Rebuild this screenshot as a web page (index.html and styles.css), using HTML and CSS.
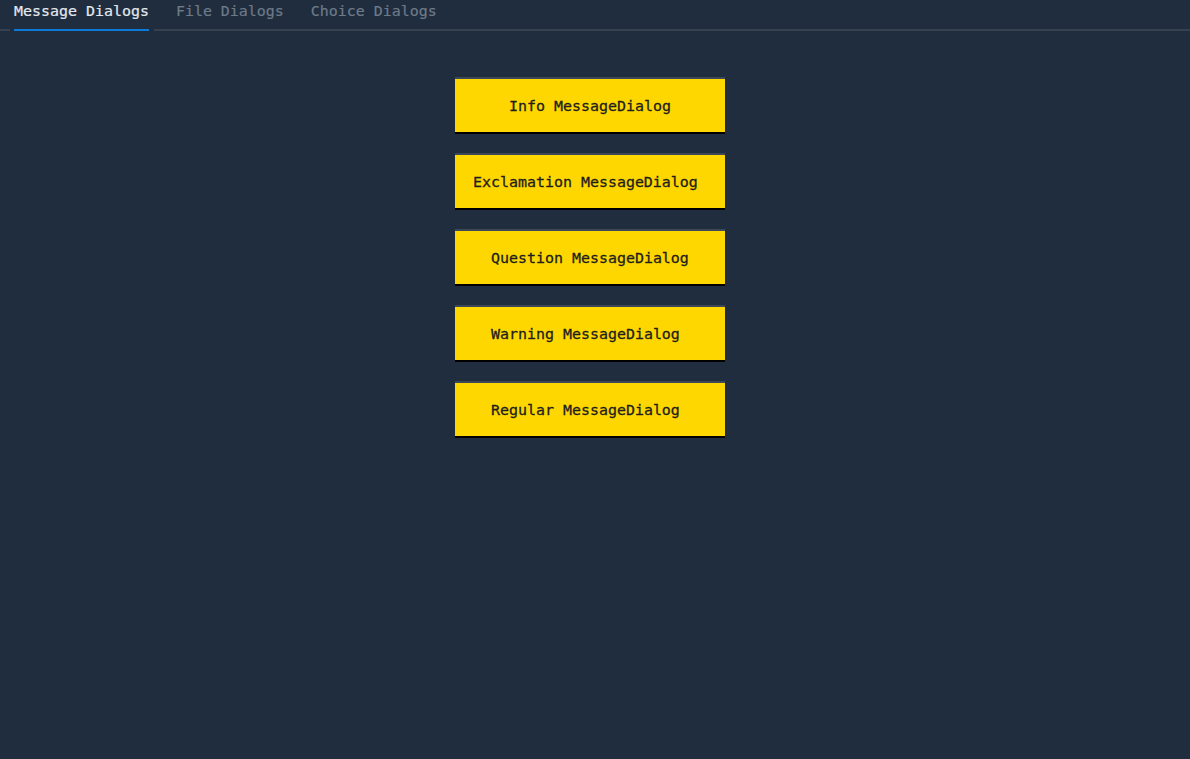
FILE: index.html
```html
<!DOCTYPE html>
<html lang="en">
<head>
<meta charset="utf-8">
<title>Message Dialogs</title>
<link rel="stylesheet" href="styles.css">
</head>
<body>
<div class="app">
  <nav class="tabs">
    <span class="tab active">Message Dialogs</span>
    <span class="tab">File Dialogs</span>
    <span class="tab">Choice Dialogs</span>
  </nav>
  <main class="panel">
    <button class="btn pad-6">Info MessageDialog</button>
    <button class="btn pad-2">Exclamation MessageDialog</button>
    <button class="btn pad-4">Question MessageDialog</button>
    <button class="btn pad-4">Warning MessageDialog</button>
    <button class="btn pad-4">Regular MessageDialog</button>
  </main>
</div>
</body>
</html>
```
FILE: styles.css
```css
html, body {
  margin: 0;
  padding: 0;
  background: #1f2d3e;
}
body {
  font-family: "DejaVu Sans Mono", "Liberation Mono", monospace;
  font-size: 14.95px;
  width: 1190px;
  height: 759px;
  overflow: hidden;
  -webkit-text-stroke: 0.2px currentColor;
}
.app {
  display: flex;
  flex-direction: column;
}
.tabs {
  display: flex;
  gap: 27px;
  padding-left: 14px;
  border-bottom: 2px solid #36414f;
}
.tab {
  position: relative;
  color: #6e7a88;
  line-height: 18px;
  padding-top: 2px;
  padding-bottom: 9px;
  margin-bottom: -2px;
  border-bottom: 2px solid transparent;
}
.tab.active {
  color: #e3e8ee;
  border-bottom-color: #0b7ad9;
}
.tab.active::before,
.tab.active::after {
  content: "";
  position: absolute;
  bottom: -2px;
  height: 2px;
  background: #1f2d3e;
}
.tab.active::before {
  left: -4px;
  width: 4px;
}
.tab.active::after {
  right: -5px;
  width: 5px;
}
.panel {
  display: flex;
  flex-direction: column;
  align-items: center;
  gap: 19px;
  padding-top: 46px;
  padding-right: 10px;
}
.btn {
  display: flex;
  align-items: center;
  justify-content: flex-start;
  width: 270px;
  height: 57px;
  box-sizing: border-box;
  margin: 0;
  padding: 0;
  border: 0;
  border-top: 2px solid #3c4757;
  border-bottom: 2px solid #000000;
  background: #ffd700;
  color: #1e1e1e;
  font-family: inherit;
  font-size: 14.95px;
  line-height: 18px;
  white-space: pre;
  -webkit-text-stroke: 0.3px currentColor;
}
.pad-6 { padding-left: 54px; }
.pad-4 { padding-left: 36px; }
.pad-2 { padding-left: 18px; }
```
